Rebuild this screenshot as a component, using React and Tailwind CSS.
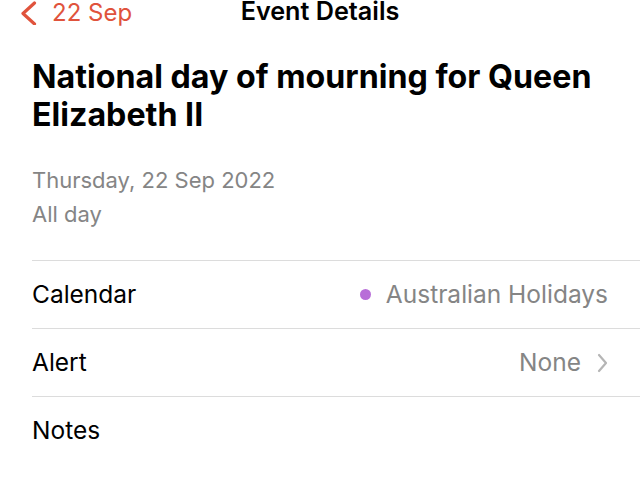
import React from "react";

export default function App() {
  return (
    <div className="w-[640px] h-[480px] bg-white overflow-hidden text-black" style={{ fontFamily: "Inter, 'Noto Sans', sans-serif" }}>
      {/* header */}
      <div className="relative h-[26px] flex justify-center">
        <div className="absolute left-[19px] top-[1px] flex items-center gap-[14px] text-[#e0533c]">
          <svg width="19" height="24" viewBox="0 0 19 24" fill="none">
            <path d="M15.5 2 L4 12.5 L15.5 23" stroke="#e0533c" strokeWidth="3.2" strokeLinecap="round" strokeLinejoin="round" />
          </svg>
          <span className="text-[24px] leading-[22px]">22 Sep</span>
        </div>
        <span className="text-[25.2px] font-semibold leading-[22px]">Event Details</span>
      </div>

      {/* title */}
      <div className="pl-[32px] pr-[20px] mt-[32px]">
        <h1 className="text-[32.2px] font-bold leading-[38px]">
          National day of mourning for Queen Elizabeth II
        </h1>
        <div className="mt-[29px] text-[22px] leading-[34px] text-[#858585]">
          <div>Thursday, 22 Sep 2022</div>
          <div>All day</div>
        </div>
      </div>

      {/* rows */}
      <div className="pl-[32px] mt-[29px]">
        <div className="border-t border-[#dcdcdc] h-[68px] flex items-center justify-between pr-[32px]">
          <span className="text-[24.5px]">Calendar</span>
          <span className="flex items-center gap-[15px] text-[24.5px] text-[#858585]">
            <span className="w-[11px] h-[11px] rounded-full bg-[#b86ed8]" />
            Australian Holidays
          </span>
        </div>
        <div className="border-t border-[#dcdcdc] h-[68px] flex items-center justify-between pr-[32px]">
          <span className="text-[24.5px]">Alert</span>
          <span className="flex items-center gap-[16px] text-[24.5px] text-[#858585]">
            None
            <svg width="11" height="20" viewBox="0 0 11 20" fill="none">
              <path d="M2 2 L9 10 L2 18" stroke="#b5b5b5" strokeWidth="2.2" strokeLinecap="round" strokeLinejoin="round" />
            </svg>
          </span>
        </div>
        <div className="border-t border-[#dcdcdc] h-[68px] flex items-center">
          <span className="text-[24.5px]">Notes</span>
        </div>
      </div>
    </div>
  );
}
